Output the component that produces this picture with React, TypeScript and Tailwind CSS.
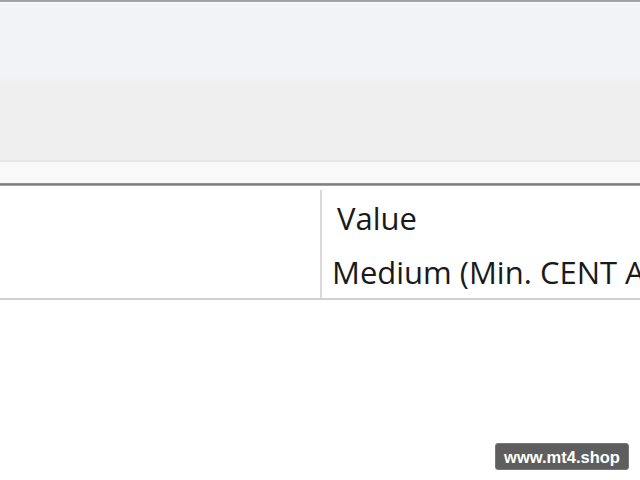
export default function App() {
  return (
    <div className="relative w-[640px] h-[480px] overflow-hidden bg-white">
      {/* ribbon / toolbar area */}
      <div className="border-t-2 border-[#a3a3a5]">
        <div className="h-px bg-[#fbfbfd]" />
        <div className="h-[72px] bg-[#f2f3f7]" />
        <div className="h-[10px] bg-gradient-to-b from-[#f2f3f6] to-[#efefef]" />
        <div className="h-[75px] bg-[#efefef]" />
        <div className="h-[2px] bg-[#e7e7e7]" />
        <div className="h-[21px] bg-[#f9f9f9]" />
        <div className="h-[3px] bg-gradient-to-b from-[#9a9a9a] via-[#7f7f7f] to-[#b5b5b5]" />
      </div>

      {/* property grid */}
      <div className="grid grid-cols-[320px_1fr] pt-1 border-b-2 border-[#d0d0d0] font-['Open_Sans',sans-serif] text-[31px] text-[#1a1a1a] leading-none">
        <div />
        <div className="border-l-2 border-[#dadada] whitespace-nowrap overflow-hidden">
          <div className="h-[55px] pl-[15px] pt-[13px]">Value</div>
          <div className="h-[53px] pl-[10px] pt-[12px]">Medium (Min. CENT Account)</div>
        </div>
      </div>

      {/* watermark */}
      <div className="absolute left-[495px] top-[443px] w-[134px] h-[27px] rounded-[3px] bg-[#5e5e5e] border border-[#777] flex items-center justify-center pt-px text-white font-['Liberation_Sans',Arial,sans-serif] font-bold text-[16.5px]">
        www.mt4.shop
      </div>
    </div>
  );
}
